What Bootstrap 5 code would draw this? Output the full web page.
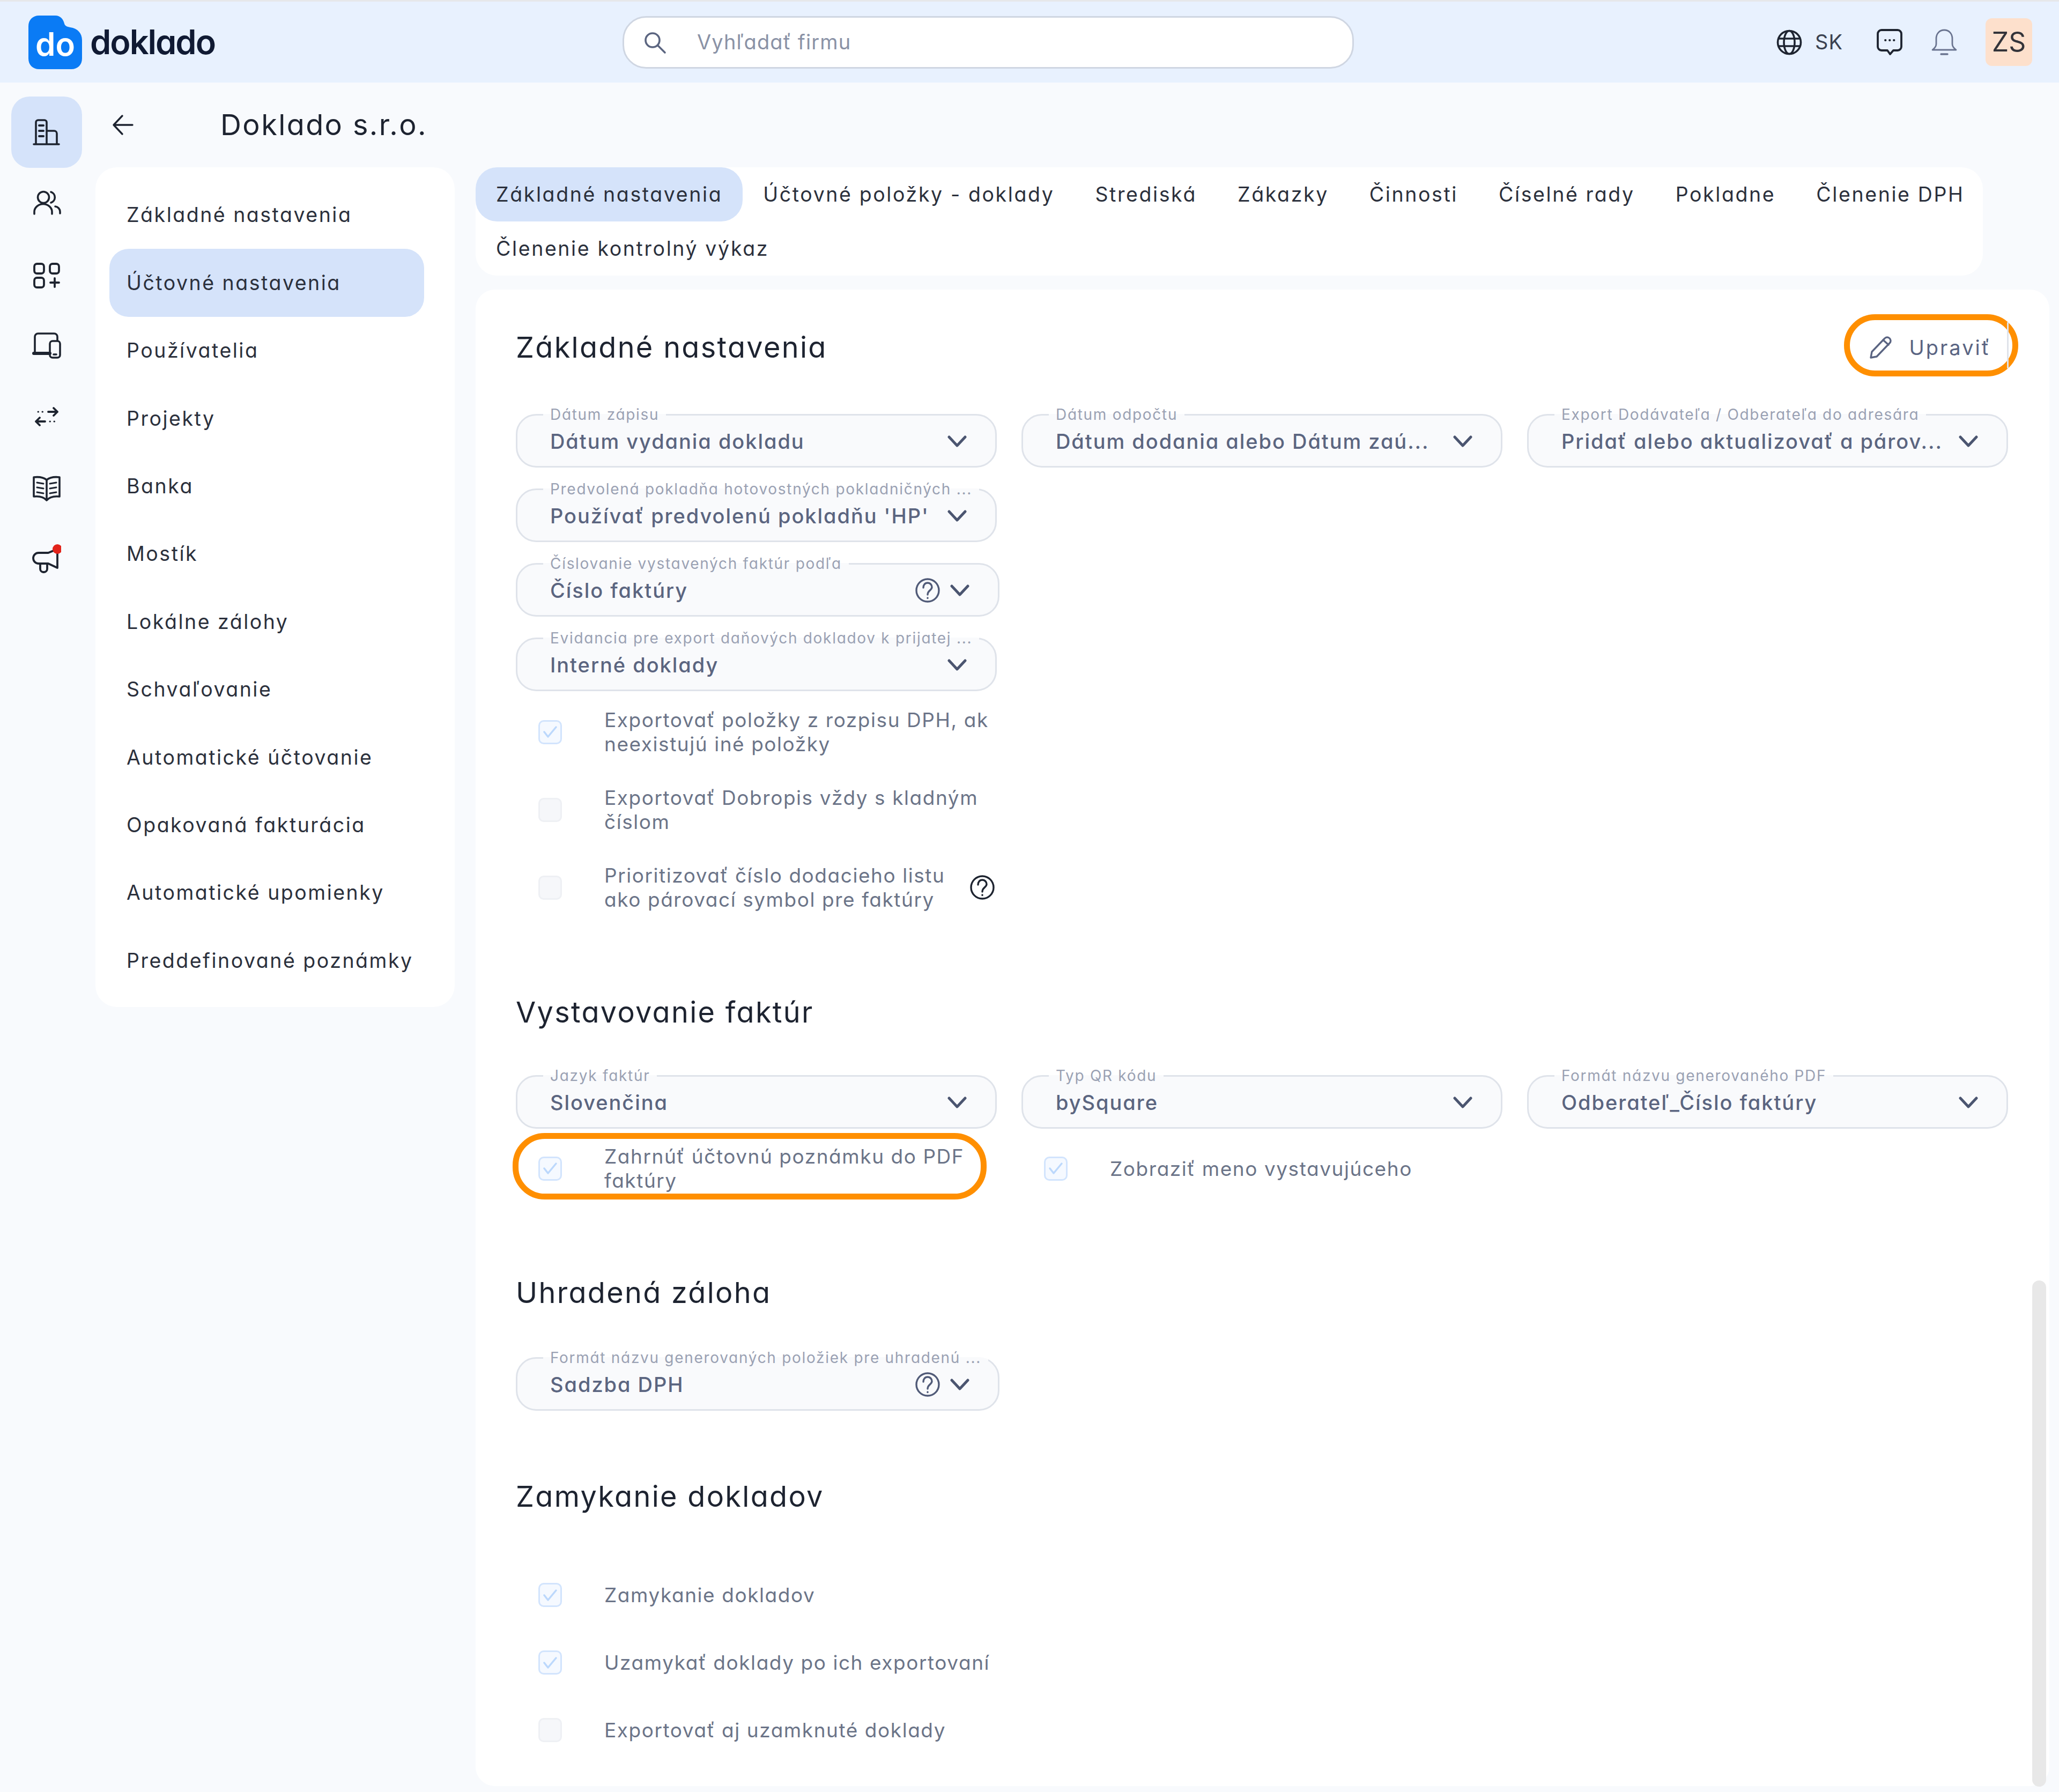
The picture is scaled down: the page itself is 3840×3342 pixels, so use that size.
<!doctype html>
<html lang="sk"><head><meta charset="utf-8"><title>Doklado</title>
<link href="https://cdn.jsdelivr.net/npm/bootstrap@5.3.0/dist/css/bootstrap.min.css" rel="stylesheet">
<style>
html,body{background:#f8fafd;}
body{font-family:Inter,"Liberation Sans",sans-serif;font-feature-settings:"cv11";width:3840px;height:3342px;overflow:hidden;color:#2b303c;}
svg{display:block;flex:none;fill:none;stroke:currentColor;stroke-linecap:round;stroke-linejoin:round;}
.topbar{height:154px;background:#e8f1fe;border-top:3px solid #e6e7ea;padding:0 50px 0 53px;flex-wrap:nowrap;}
.brand{width:1108px;gap:15px;}
.brand-word{font-size:63px;font-weight:600;color:#101a33;letter-spacing:-2px;line-height:1;}
.brand-mark{position:relative;width:100px;height:100px;}
.brand-do{position:absolute;inset:0;display:flex;align-items:center;justify-content:center;color:#fff;font-size:60px;font-weight:600;line-height:1;padding-top:6px;}
.searchbox{width:1364px;height:98px;background:#fff;border:3px solid #cfd6e2;border-radius:44px;padding-left:33px;gap:53px;color:#5b6580;}
.searchbox input{border:0;outline:0;background:transparent;font:inherit;font-size:38px;letter-spacing:1.1px;flex:1;color:#5b6580;}
.searchbox input::placeholder{color:#8a92a6;opacity:1;}
.tools{margin-left:auto;color:#1e2430;}
.lang{font-size:38px;letter-spacing:1px;margin:0 63px 0 24px;color:#3a4150;}
.avatar{width:87px;height:89px;background:#fde0cc;border-radius:12px;margin-left:53px;font-size:50px;color:#33343a;}
.rail{width:175px;padding:26px 22px 0 21px;}
.rail .nav-link{height:132.7px;padding:0;border-radius:34px;display:flex;align-items:center;justify-content:center;color:#1e2430;}
.rail .nav-link.active{background:#d5e3fa;color:#1e2430;}
.titlebar{height:158px;padding-left:34px;color:#1d2330;}
.titlebar h1{font-size:54px;font-weight:400;letter-spacing:2.4px;margin:0 0 0 162px;line-height:1;}
.panes{padding-left:3px;gap:39px;}
.sidecard{width:670px;height:1566px;background:#fff;border-radius:40px;padding:26px 57px 0 26px;}
.sidecard .nav-link,.tabcard .nav-link{font-size:37.5px;letter-spacing:2.5px;color:#2b303c;line-height:1;white-space:nowrap;}
.sidecard .nav-link{height:126.4px;display:flex;align-items:center;padding:0 32px;border-radius:36px;}
.nav-pills .nav-link.active{background:#d5e3fa;color:#2b303c;}
.rightcol{width:2935px;}
.tabcard{width:2811px;background:#fff;border-radius:40px;height:202px;}
.tabcard .nav-link{height:101px;display:flex;align-items:center;padding:0 38px;border-radius:40px;letter-spacing:2.6px;}
.tabcard .nav-link.tab-last{padding-right:14px;}
.maincard{position:relative;margin-top:26px;height:2791px;background:#fff;border-radius:36px;padding:74px 0 0 75px;}
.sect{font-size:54px;font-weight:400;letter-spacing:2.3px;line-height:68px;margin:0;color:#1d2330;}
.sect-a{margin-top:154px;}.sect-b{margin-top:153px;}.sect-c{margin-top:126px;}
.fieldgrid{display:grid;grid-template-columns:repeat(3,897px);column-gap:46px;align-items:start;}
.fg-a{margin-top:74px;}.fg-b{margin-top:67px;}.fg-c{margin-top:70px;}
.fg-d{margin-top:29px;}
.fieldstack{display:flex;flex-direction:column;gap:23px;}
.selbox{margin:0;min-width:0;border:3px solid #dfe3ea;border-radius:38px;background:#f9fafc;padding:0;height:116px;}
.selbox legend{float:none;width:auto;margin:0 0 0 48px;padding:0 13px;font-size:28px;line-height:34px;letter-spacing:1.7px;color:#9aa1b3;white-space:nowrap;}
.selbox .selrow{height:79px;padding:0 53px 14px 61px;gap:19px;color:#515b78;}
.selbox .selval{flex:1;font-size:38px;font-weight:500;letter-spacing:1.95px;line-height:50px;white-space:nowrap;overflow:hidden;color:#5b6580;}
.selbox.wide{width:902px;}
.chev{width:36px;height:22px;stroke-width:5;color:#4b5570;}
.qmark{width:46px;height:46px;stroke-width:3.4;}
.checkrow{display:flex;align-items:center;margin:0;min-height:45px;padding-left:42px;gap:0;}
.checkrow .form-check-input{width:44px;height:45px;margin:0;flex:none;border:3px solid #eef0f4;background-color:#f6f7fa;border-radius:10px;opacity:1;}
.checkrow .form-check-input:checked{border-color:#d2e4fd;background-color:#f5f9ff;background-size:32px;background-image:url("data:image/svg+xml,%3csvg xmlns='http://www.w3.org/2000/svg' viewBox='0 0 32 32'%3e%3cpath fill='none' stroke='%23bcd8fc' stroke-width='3.5' stroke-linecap='round' stroke-linejoin='round' d='M5 16l7 9L27 7'/%3e%3c/svg%3e");}
.checkrow .form-check-label{opacity:1!important;margin-left:79px;font-size:37px;letter-spacing:1.55px;line-height:45px;color:#6b7488;}
.checklist{margin-top:31px;display:flex;flex-direction:column;gap:55px;width:897px;}
.locks{margin-top:127px;display:flex;flex-direction:column;gap:81px;}
.hint{margin:0 4px 0 24px;color:#1e2430;}
.callout{position:absolute;border:11px solid #ff8f00;pointer-events:none;}
.call-check{top:-21px;bottom:-13px;left:-6px;right:19px;border-radius:60px;}
.call-edit{top:-32px;bottom:-24px;left:-46px;right:-51px;border-radius:58px;}
.call-edit::before{content:"";position:absolute;top:4px;bottom:4px;right:7px;width:3px;background:#dfe3ea;}
.relbox{position:relative;}
.editbtn{position:relative;display:inline-flex;align-items:center;gap:30px;padding:0;height:60px;background:transparent;border:0;color:#5a6482;font-size:38px;letter-spacing:3px;line-height:1;}
.headrow{padding-right:93px;width:100%;}
.editwrap{margin-right:16px;}
.sbar{position:absolute;right:6px;bottom:-1px;width:26px;height:944px;background:#e8e8e8;border-radius:13px;}
</style></head>
<body>
<nav class="navbar topbar">
  <div class="d-flex align-items-center brand">
    <span class="brand-mark"><svg width="100" height="100" viewBox="0 0 100 100" style="stroke:none"><path fill="#0a7bf5" d="M20 0H50C60 0 65 7 67 15C68 19 72 21 78 22C92 24 100 33 100 46V80C100 92 92 100 80 100H20C8 100 0 92 0 80V20C0 8 8 0 20 0Z"/></svg><span class="brand-do">do</span></span>
    <span class="brand-word">doklado</span>
  </div>
  <div class="d-flex align-items-center searchbox">
    <svg width="48" height="48" viewBox="0 0 48 48" stroke-width="3.6"><circle cx="20" cy="20" r="13"/><path d="M30 30l13 13"/></svg>
    <input type="text" placeholder="Vyhľadať firmu" aria-label="Vyhľadať firmu">
  </div>
  <div class="d-flex align-items-center tools">
    <svg width="48" height="48" viewBox="0 0 48 48" stroke-width="3.6"><circle cx="24" cy="24" r="21.5"/><ellipse cx="24" cy="24" rx="10" ry="21.5"/><path d="M4 17h40M4 31h40"/></svg>
    <span class="lang">SK</span>
    <svg width="48" height="50" viewBox="0 0 48 50" stroke-width="3.8"><path d="M9 2h30a7 7 0 0 1 7 7v24a7 7 0 0 1-7 7h-8l-6 7-5-7H9a7 7 0 0 1-7-7V9a7 7 0 0 1 7-7Z"/><path d="M16 21h.5M24 21h.5M32 21h.5"/></svg>
    <svg width="48" height="50" viewBox="0 0 48 50" stroke-width="2.8" style="color:#6a7490;margin-left:54px"><path d="M24 2c-9 0-15 7-15 16v10c0 5-3 8-7 11h44c-4-3-7-6-7-11V18c0-9-6-16-15-16Z"/><path d="M18 47h12" stroke-width="3.4"/></svg>
    <span class="d-flex align-items-center justify-content-center avatar">ZS</span>
  </div>
</nav>
<div class="d-flex">
  <nav class="nav flex-column rail">
    <a class="nav-link active" href="#" aria-label="Firmy"><svg width="54" height="54" viewBox="0 0 54 54" stroke-width="3.6"><path d="M3 50h47M7 50V9a4 4 0 0 1 4-4h12a4 4 0 0 1 4 4v41M27 25h14a5 5 0 0 1 5 5v20"/><path d="M13 15h8M13 25h8M13 35h8" stroke-width="4"/></svg></a>
    <a class="nav-link" href="#" aria-label="Používatelia"><svg width="54" height="54" viewBox="0 0 54 54" stroke-width="3.6"><circle cx="21" cy="16" r="10.5"/><path d="M35 6a10.5 10.5 0 0 1 0 20M4 47v-4a16 14 0 0 1 33 0v4M43 33a10 10 0 0 1 9 10v3"/></svg></a>
    <a class="nav-link" href="#" aria-label="Aplikácie"><svg width="54" height="54" viewBox="0 0 54 54" stroke-width="3.8"><rect x="4" y="7" width="18" height="18" rx="5"/><rect x="33" y="7" width="17" height="18" rx="5"/><rect x="4" y="33" width="18" height="18" rx="5"/><path d="M34 42h16M42 34v16"/></svg></a>
    <a class="nav-link" href="#" aria-label="Zariadenia"><svg width="54" height="54" viewBox="0 0 54 54" stroke-width="3.6"><path d="M5 40V11a6 6 0 0 1 6-6h30a6 6 0 0 1 6 6v7"/><path d="M3 42h30" stroke-width="6"/><rect x="33" y="19" width="19" height="31" rx="5"/><path d="M40 44h5"/></svg></a>
    <a class="nav-link" href="#" aria-label="Prevody"><svg width="54" height="54" viewBox="0 0 54 54" stroke-width="3.8"><path d="M30 18h17M40 11l7 7-7 7M24 36H7M14 29l-7 7 7 7"/><path d="M11 18h.5M19 18h.5M33 36h.5M41 36h.5" stroke-width="3"/></svg></a>
    <a class="nav-link" href="#" aria-label="Návody"><svg width="54" height="54" viewBox="0 0 54 54" stroke-width="3.6"><path d="M27 12C21 7 12 6 3 7v36c9-1 18 0 24 7 6-7 15-8 24-7V7c-9-1-18 0-24 5ZM27 12v38"/><path d="M9 17l12 2M9 26l12 2M9 35l12 2M45 17l-12 2M45 26l-12 2M45 35l-12 2" stroke-width="3"/></svg></a>
    <a class="nav-link" href="#" aria-label="Novinky"><svg width="54" height="54" viewBox="0 0 54 54" stroke-width="3.8"><path d="M12 16h18l17-7v35l-17-8H12a10 10 0 0 1 0-20Z"/><path d="M15 36v10a6 6 0 0 0 6 6h1a6 6 0 0 0 6-6V37"/><circle cx="47" cy="9" r="9" fill="#e2231a" stroke="none"/></svg></a>
  </nav>
  <div class="flex-grow-1">
    <div class="d-flex align-items-center titlebar">
      <svg width="40" height="40" viewBox="0 0 40 40" stroke-width="3.4"><path d="M38 20H3M19 3L3 20l16 17"/></svg>
      <h1>Doklado s.r.o.</h1>
    </div>
    <div class="d-flex align-items-start panes">
      <nav class="nav nav-pills flex-column flex-nowrap sidecard">
        <a class="nav-link" href="#">Základné nastavenia</a>
        <a class="nav-link active" href="#">Účtovné nastavenia</a>
        <a class="nav-link" href="#">Používatelia</a>
        <a class="nav-link" href="#">Projekty</a>
        <a class="nav-link" href="#">Banka</a>
        <a class="nav-link" href="#">Mostík</a>
        <a class="nav-link" href="#">Lokálne zálohy</a>
        <a class="nav-link" href="#">Schvaľovanie</a>
        <a class="nav-link" href="#">Automatické účtovanie</a>
        <a class="nav-link" href="#">Opakovaná fakturácia</a>
        <a class="nav-link" href="#">Automatické upomienky</a>
        <a class="nav-link" href="#">Preddefinované poznámky</a>
      </nav>
      <div class="rightcol">
        <nav class="nav nav-pills tabcard">
          <a class="nav-link active" href="#">Základné nastavenia</a>
          <a class="nav-link" href="#">Účtovné položky - doklady</a>
          <a class="nav-link" href="#">Strediská</a>
          <a class="nav-link" href="#">Zákazky</a>
          <a class="nav-link" href="#">Činnosti</a>
          <a class="nav-link" href="#">Číselné rady</a>
          <a class="nav-link" href="#">Pokladne</a>
          <a class="nav-link tab-last" href="#">Členenie DPH</a>
          <a class="nav-link" href="#">Členenie kontrolný výkaz</a>
        </nav>
        <section class="maincard">
          <div class="d-flex align-items-center justify-content-between headrow">
            <h2 class="sect">Základné nastavenia</h2>
            <div class="relbox editwrap">
              <button class="editbtn" type="button"><svg width="46" height="46" viewBox="0 0 46 46" stroke-width="3.4"><path d="M4 42l2-11L30 6a6 6 0 0 1 9 0 6 6 0 0 1 0 9L15 40Z"/><path d="M27 9l10 9"/></svg>Upraviť</button>
              <span class="callout call-edit"></span>
            </div>
          </div>
          <div class="fieldgrid fg-a">
            <div class="fieldstack">
              <fieldset class="selbox"><legend>Dátum zápisu</legend><div class="d-flex align-items-center selrow"><span class="selval">Dátum vydania dokladu</span><svg class="chev" viewBox="0 0 36 22"><path d="M3 3l15 16L33 3"/></svg></div></fieldset>
              <fieldset class="selbox"><legend>Predvolená pokladňa hotovostných pokladničných ...</legend><div class="d-flex align-items-center selrow"><span class="selval">Používať predvolenú pokladňu 'HP'</span><svg class="chev" viewBox="0 0 36 22"><path d="M3 3l15 16L33 3"/></svg></div></fieldset>
              <fieldset class="selbox wide"><legend>Číslovanie vystavených faktúr podľa</legend><div class="d-flex align-items-center selrow"><span class="selval">Číslo faktúry</span><svg class="qmark" viewBox="0 0 46 46"><circle cx="23" cy="23" r="21"/><path d="M15 18c0-5 3-9 8-9s8 4 8 8c0 6-8 6-8 14M23 37v.5"/></svg><svg class="chev" viewBox="0 0 36 22"><path d="M3 3l15 16L33 3"/></svg></div></fieldset>
              <fieldset class="selbox"><legend>Evidancia pre export daňových dokladov k prijatej ...</legend><div class="d-flex align-items-center selrow"><span class="selval">Interné doklady</span><svg class="chev" viewBox="0 0 36 22"><path d="M3 3l15 16L33 3"/></svg></div></fieldset>
            </div>
            <fieldset class="selbox"><legend>Dátum odpočtu</legend><div class="d-flex align-items-center selrow"><span class="selval">Dátum dodania alebo Dátum zaú...</span><svg class="chev" viewBox="0 0 36 22"><path d="M3 3l15 16L33 3"/></svg></div></fieldset>
            <fieldset class="selbox"><legend>Export Dodávateľa / Odberateľa do adresára</legend><div class="d-flex align-items-center selrow"><span class="selval">Pridať alebo aktualizovať a párov...</span><svg class="chev" viewBox="0 0 36 22"><path d="M3 3l15 16L33 3"/></svg></div></fieldset>
          </div>
          <div class="checklist">
            <div class="form-check checkrow"><input class="form-check-input" type="checkbox" id="c1" checked disabled><label class="form-check-label" for="c1">Exportovať položky z rozpisu DPH, ak neexistujú iné položky</label></div>
            <div class="form-check checkrow"><input class="form-check-input" type="checkbox" id="c2" disabled><label class="form-check-label" for="c2">Exportovať Dobropis vždy s kladným číslom</label></div>
            <div class="form-check checkrow"><input class="form-check-input" type="checkbox" id="c3" disabled><label class="form-check-label" for="c3">Prioritizovať číslo dodacieho listu ako párovací symbol pre faktúry</label><svg class="qmark hint" viewBox="0 0 46 46"><circle cx="23" cy="23" r="21"/><path d="M15 18c0-5 3-9 8-9s8 4 8 8c0 6-8 6-8 14M23 37v.5"/></svg></div>
          </div>
          <h2 class="sect sect-a">Vystavovanie faktúr</h2>
          <div class="fieldgrid fg-b">
            <fieldset class="selbox"><legend>Jazyk faktúr</legend><div class="d-flex align-items-center selrow"><span class="selval">Slovenčina</span><svg class="chev" viewBox="0 0 36 22"><path d="M3 3l15 16L33 3"/></svg></div></fieldset>
            <fieldset class="selbox"><legend>Typ QR kódu</legend><div class="d-flex align-items-center selrow"><span class="selval">bySquare</span><svg class="chev" viewBox="0 0 36 22"><path d="M3 3l15 16L33 3"/></svg></div></fieldset>
            <fieldset class="selbox"><legend>Formát názvu generovaného PDF</legend><div class="d-flex align-items-center selrow"><span class="selval">Odberateľ_Číslo faktúry</span><svg class="chev" viewBox="0 0 36 22"><path d="M3 3l15 16L33 3"/></svg></div></fieldset>
          </div>
          <div class="fieldgrid fg-d">
            <div class="relbox"><div class="form-check checkrow"><input class="form-check-input" type="checkbox" id="c4" checked disabled><label class="form-check-label" for="c4">Zahrnúť účtovnú poznámku do PDF faktúry</label></div><span class="callout call-check"></span></div>
            <div class="form-check checkrow align-self-center"><input class="form-check-input" type="checkbox" id="c5" checked disabled><label class="form-check-label" for="c5">Zobraziť meno vystavujúceho</label></div>
          </div>
          <h2 class="sect sect-b">Uhradená záloha</h2>
          <div class="fieldgrid fg-c">
            <fieldset class="selbox wide"><legend>Formát názvu generovaných položiek pre uhradenú ...</legend><div class="d-flex align-items-center selrow"><span class="selval">Sadzba DPH</span><svg class="qmark" viewBox="0 0 46 46"><circle cx="23" cy="23" r="21"/><path d="M15 18c0-5 3-9 8-9s8 4 8 8c0 6-8 6-8 14M23 37v.5"/></svg><svg class="chev" viewBox="0 0 36 22"><path d="M3 3l15 16L33 3"/></svg></div></fieldset>
          </div>
          <h2 class="sect sect-c">Zamykanie dokladov</h2>
          <div class="locks">
            <div class="form-check checkrow"><input class="form-check-input" type="checkbox" id="c6" checked disabled><label class="form-check-label" for="c6">Zamykanie dokladov</label></div>
            <div class="form-check checkrow"><input class="form-check-input" type="checkbox" id="c7" checked disabled><label class="form-check-label" for="c7">Uzamykať doklady po ich exportovaní</label></div>
            <div class="form-check checkrow"><input class="form-check-input" type="checkbox" id="c8" disabled><label class="form-check-label" for="c8">Exportovať aj uzamknuté doklady</label></div>
          </div>
          <div class="sbar"></div>
        </section>
      </div>
    </div>
  </div>
</div>
<script src="https://cdn.jsdelivr.net/npm/bootstrap@5.3.0/dist/js/bootstrap.bundle.min.js"></script>
</body></html>
